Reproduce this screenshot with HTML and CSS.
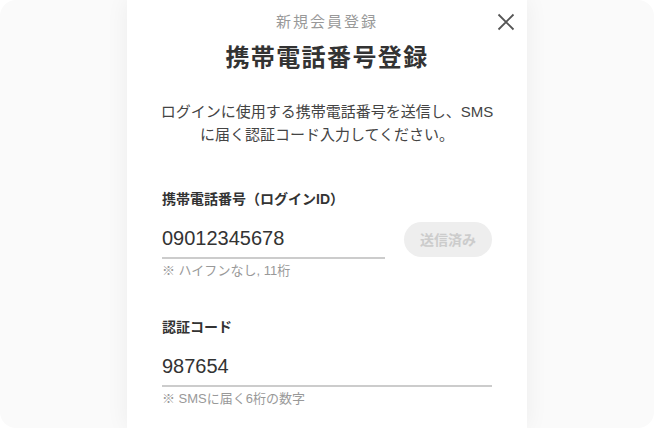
FILE: index.html
```html
<!DOCTYPE html>
<html lang="ja">
<head>
    <meta charset="UTF-8">
    <meta name="viewport" content="width=device-width, initial-scale=1.0">
    <title>携帯電話番号登録</title>
    <link rel="stylesheet" href="styles.css">
</head>
<body>
    <div class="screen">
        <div class="card">
            <button class="close-button" aria-label="閉じる">
                <svg width="18" height="18" viewBox="0 0 18 18">
                    <path d="M1.5 1.5 L16.5 16.5 M16.5 1.5 L1.5 16.5" stroke="#555" stroke-width="1.8" fill="none"/>
                </svg>
            </button>
            <div class="header">
                <div class="subtitle">新規会員登録</div>
                <h1 class="title">携帯電話番号登録</h1>
            </div>
            <p class="description">ログインに使用する携帯電話番号を送信し、SMS<br>に届く認証コード入力してください。</p>

            <div class="field">
                <label class="field-label" for="phoneInput">携帯電話番号（ログインID）</label>
                <div class="field-row">
                    <input id="phoneInput" class="field-input" type="text" value="09012345678">
                    <button class="send-button" disabled>送信済み</button>
                </div>
                <div class="field-hint">※ ハイフンなし, 11桁</div>
            </div>

            <div class="field field-code">
                <label class="field-label" for="codeInput">認証コード</label>
                <div class="field-row">
                    <input id="codeInput" class="field-input" type="text" value="987654">
                </div>
                <div class="field-hint">※ SMSに届く6桁の数字</div>
            </div>
        </div>
    </div>
</body>
</html>
```

FILE: styles.css
```css
body, html {
    height: 100%;
    margin: 0;
    padding: 0;
    font-family: 'Liberation Sans', 'Noto Sans CJK JP', sans-serif;
    background-color: #fff;
    color: #333;
    overflow: hidden;
}
.screen {
    height: 428px;
    background-color: #fafafa;
    border-radius: 16px;
    overflow: hidden;
    display: flex;
    justify-content: center;
}
.card {
    position: relative;
    width: 400px;
    height: 100%;
    background-color: white;
    box-shadow: 0 0 22px rgba(0,0,0,0.06);
    padding: 11px 35px 0;
    box-sizing: border-box;
}
.close-button {
    position: absolute;
    top: 13px;
    right: 12px;
    width: 18px;
    height: 18px;
    padding: 0;
    border: none;
    background: none;
    cursor: pointer;
}
.close-button svg {
    display: block;
}
.header {
    text-align: center;
}
.subtitle {
    font-size: 15px;
    line-height: 22px;
    letter-spacing: 2px;
    color: #999;
}
.title {
    margin: 8px 0 0;
    font-size: 24px;
    line-height: 34px;
    letter-spacing: 1.4px;
    font-weight: bold;
    color: #333;
}
.description {
    margin: 25px -10px 0;
    font-size: 15px;
    line-height: 23px;
    text-align: center;
    color: #444;
    white-space: nowrap;
}
.field {
    margin-top: 43px;
}
.field-code {
    margin-top: 37px;
}
.field-label {
    display: block;
    font-size: 14px;
    line-height: 20px;
    font-weight: bold;
    color: #333;
}
.field-row {
    display: flex;
    align-items: center;
    gap: 19px;
    margin-top: 10px;
}
.field-input {
    flex: 1;
    min-width: 0;
    height: 38px;
    padding: 0;
    border: none;
    border-bottom: 2px solid #ccc;
    font-family: inherit;
    font-size: 20px;
    color: #333;
    background: none;
    outline: none;
    box-sizing: content-box;
}
.send-button {
    flex: 0 0 88px;
    height: 35px;
    border: none;
    border-radius: 18px;
    background-color: #eee;
    color: #ccc;
    font-family: inherit;
    font-size: 14px;
    font-weight: bold;
}
.field-hint {
    margin-top: 3px;
    font-size: 13px;
    line-height: 18px;
    color: #999;
}
```
